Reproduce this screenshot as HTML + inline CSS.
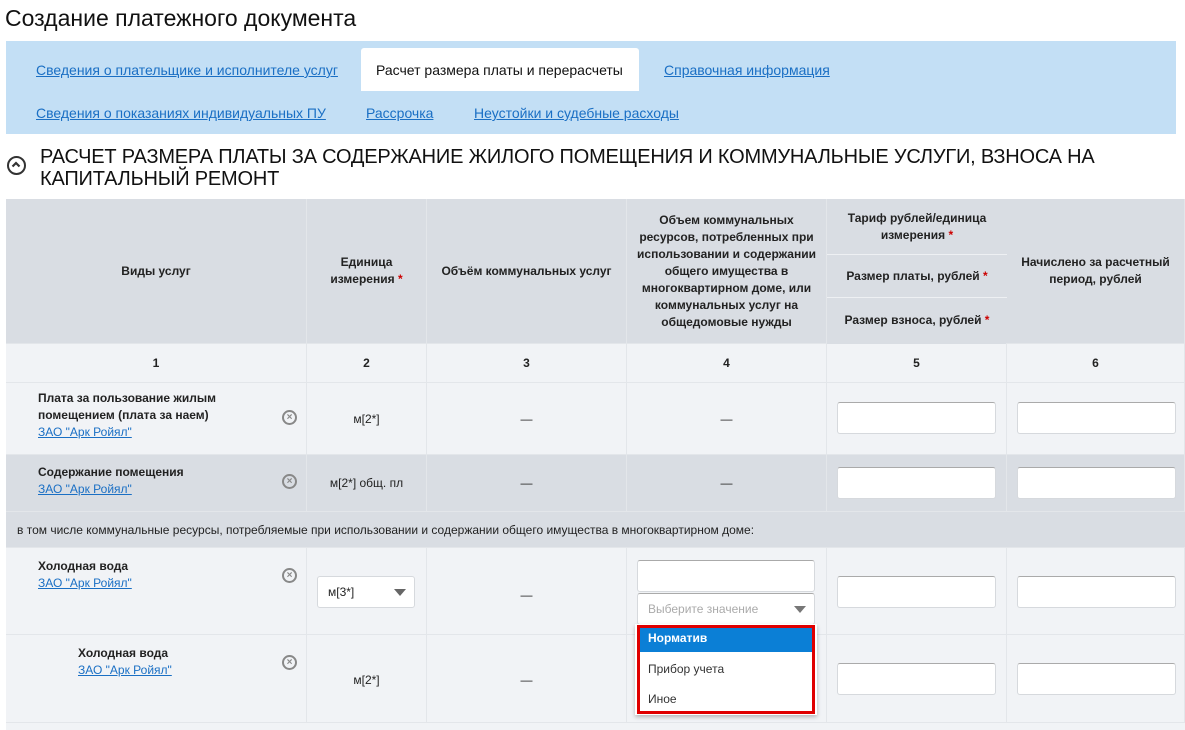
<!DOCTYPE html>
<html><head><meta charset="utf-8"><style>
body{margin:0;width:1185px;height:730px;overflow:hidden;background:#fff;font-family:"Liberation Sans",Arial,sans-serif;color:#222;position:relative}
.a{position:absolute}
a,.lnk{color:#1a6fc4;text-decoration:underline}
.t{font-size:14px}
.cell{position:absolute;box-sizing:border-box;border-right:1px solid #e3e6ea;border-bottom:1px solid #e3e6ea}
.hd{background:#d9dde3;font-weight:bold;font-size:12px;text-align:center;color:#222;display:flex;align-items:center;justify-content:center;line-height:17px}
.lt{background:#f1f3f6}
.dk{background:#d9dde3}
.c{display:flex;align-items:center;justify-content:center;font-size:12px}
.st{color:#c00}
.inp{position:absolute;background:#fff;border:1px solid #d6d9dd;border-top-color:#aaa;border-radius:3px;box-sizing:border-box}
.x{position:absolute;width:11px;height:11px;border:2px solid #888;border-radius:50%;font-size:10px;line-height:11px;text-align:center;color:#888;font-weight:bold}
.nm{position:absolute;font-size:12px;font-weight:bold;line-height:17px}
.sub{font-size:12px;font-weight:normal}
</style></head><body>
<div class="a" style="left:5px;top:5px;font-size:23px;color:#111">Создание платежного документа</div>
<div class="a" style="left:6px;top:41px;width:1170px;height:93px;background:#c3dff5"></div>
<div class="a" style="left:361px;top:48px;width:278px;height:43px;background:#fff;border-radius:3px 3px 0 0"></div>
<div class="a t lnk" style="left:36px;top:62px">Сведения о плательщике и исполнителе услуг</div>
<div class="a t" style="left:376px;top:62px;color:#111">Расчет размера платы и перерасчеты</div>
<div class="a t lnk" style="left:664px;top:62px">Справочная информация</div>
<div class="a t lnk" style="left:36px;top:105px">Сведения о показаниях индивидуальных ПУ</div>
<div class="a t lnk" style="left:366px;top:105px">Рассрочка</div>
<div class="a t lnk" style="left:474px;top:105px">Неустойки и судебные расходы</div>
<div class="a" style="left:7px;top:156px;width:19px;height:19px;border:2.5px solid #333;border-radius:50%;box-sizing:border-box"><svg width="14" height="14" viewBox="0 0 14 14" style="position:absolute;left:0;top:0"><path d="M3.5 8.5L7 5L10.5 8.5" fill="none" stroke="#333" stroke-width="2.2"/></svg></div>
<div class="a" style="left:40px;top:146px;font-size:20px;line-height:22px;color:#111;letter-spacing:-0.2px">РАСЧЕТ РАЗМЕРА ПЛАТЫ ЗА СОДЕРЖАНИЕ ЖИЛОГО ПОМЕЩЕНИЯ И КОММУНАЛЬНЫЕ УСЛУГИ, ВЗНОСА НА<br>КАПИТАЛЬНЫЙ РЕМОНТ</div>

<!-- header -->
<div class="cell hd" style="left:6px;top:199px;width:301px;height:145px">Виды услуг</div>
<div class="cell hd" style="left:307px;top:199px;width:120px;height:145px"><div>Единица<br>измерения <span class="st">*</span></div></div>
<div class="cell hd" style="left:427px;top:199px;width:200px;height:145px">Объём коммунальных услуг</div>
<div class="cell hd" style="left:627px;top:199px;width:200px;height:145px"><div>Объем коммунальных<br>ресурсов, потребленных при<br>использовании и содержании<br>общего имущества в<br>многоквартирном доме, или<br>коммунальных услуг на<br>общедомовые нужды</div></div>
<div class="cell hd" style="left:827px;top:199px;width:180px;height:145px;border-bottom:none"></div>
<div class="a hd" style="left:827px;top:199px;width:180px;height:55px;border-bottom:1px solid #eef0f3"><div>Тариф рублей/единица<br>измерения <span class="st">*</span></div></div>
<div class="a hd" style="left:827px;top:255px;width:180px;height:43px;border-bottom:1px solid #eef0f3;box-sizing:border-box"><div>Размер платы, рублей <span class="st">*</span></div></div>
<div class="a hd" style="left:827px;top:298px;width:180px;height:45px"><div>Размер взноса, рублей <span class="st">*</span></div></div>
<div class="cell hd" style="left:1007px;top:199px;width:178px;height:145px"><div>Начислено за расчетный<br>период, рублей</div></div>

<!-- numbers -->
<div class="cell lt c" style="left:6px;top:344px;width:301px;height:39px;font-weight:bold">1</div>
<div class="cell lt c" style="left:307px;top:344px;width:120px;height:39px;font-weight:bold">2</div>
<div class="cell lt c" style="left:427px;top:344px;width:200px;height:39px;font-weight:bold">3</div>
<div class="cell lt c" style="left:627px;top:344px;width:200px;height:39px;font-weight:bold">4</div>
<div class="cell lt c" style="left:827px;top:344px;width:180px;height:39px;font-weight:bold">5</div>
<div class="cell lt c" style="left:1007px;top:344px;width:178px;height:39px;font-weight:bold">6</div>

<!-- row1 -->
<div class="cell lt" style="left:6px;top:383px;width:301px;height:72px"></div>
<div class="cell lt c" style="left:307px;top:383px;width:120px;height:72px">м[2*]</div>
<div class="cell lt c" style="left:427px;top:383px;width:200px;height:72px">—</div>
<div class="cell lt c" style="left:627px;top:383px;width:200px;height:72px">—</div>
<div class="cell lt" style="left:827px;top:383px;width:180px;height:72px"></div>
<div class="cell lt" style="left:1007px;top:383px;width:178px;height:72px"></div>
<div class="nm" style="left:38px;top:390px">Плата за пользование жилым<br>помещением (плата за наем)<br><span class="lnk sub">ЗАО "Арк Ройял"</span></div>
<div class="x" style="left:282px;top:410px">×</div>
<div class="inp" style="left:837px;top:402px;width:159px;height:32px"></div>
<div class="inp" style="left:1017px;top:402px;width:159px;height:32px"></div>

<!-- row2 -->
<div class="cell dk" style="left:6px;top:455px;width:301px;height:57px"></div>
<div class="cell dk c" style="left:307px;top:455px;width:120px;height:57px">м[2*] общ. пл</div>
<div class="cell dk c" style="left:427px;top:455px;width:200px;height:57px">—</div>
<div class="cell dk c" style="left:627px;top:455px;width:200px;height:57px">—</div>
<div class="cell dk" style="left:827px;top:455px;width:180px;height:57px"></div>
<div class="cell dk" style="left:1007px;top:455px;width:178px;height:57px"></div>
<div class="nm" style="left:38px;top:464px">Содержание помещения<br><span class="lnk sub">ЗАО "Арк Ройял"</span></div>
<div class="x" style="left:282px;top:474px">×</div>
<div class="inp" style="left:837px;top:467px;width:159px;height:32px"></div>
<div class="inp" style="left:1017px;top:467px;width:159px;height:32px"></div>

<!-- note -->
<div class="a" style="left:6px;top:512px;width:1179px;height:36px;background:#d9dde3;font-size:12px;line-height:36px;box-sizing:border-box;padding-left:11px;border-bottom:1px solid #e3e6ea">в том числе коммунальные ресурсы, потребляемые при использовании и содержании общего имущества в многоквартирном доме:</div>

<!-- row3 -->
<div class="cell lt" style="left:6px;top:548px;width:301px;height:87px"></div>
<div class="cell lt" style="left:307px;top:548px;width:120px;height:87px"></div>
<div class="cell lt c" style="left:427px;top:548px;width:200px;height:87px;padding-top:8px">—</div>
<div class="cell lt" style="left:627px;top:548px;width:200px;height:87px"></div>
<div class="cell lt" style="left:827px;top:548px;width:180px;height:87px"></div>
<div class="cell lt" style="left:1007px;top:548px;width:178px;height:87px"></div>
<div class="nm" style="left:38px;top:558px">Холодная вода<br><span class="lnk sub">ЗАО "Арк Ройял"</span></div>
<div class="x" style="left:282px;top:568px">×</div>
<div class="inp" style="left:317px;top:576px;width:98px;height:32px;border-top-color:#d6d9dd;font-size:12px;line-height:30px;padding-left:10px">м[3*]<span style="position:absolute;right:8px;top:12px;border-left:6px solid transparent;border-right:6px solid transparent;border-top:7px solid #666"></span></div>
<div class="inp" style="left:637px;top:560px;width:178px;height:32px"></div>
<div class="inp" style="left:637px;top:593px;width:178px;height:32px;font-size:12px;line-height:30px;padding-left:10px;color:#aaa">Выберите значение<span style="position:absolute;right:8px;top:12px;border-left:6px solid transparent;border-right:6px solid transparent;border-top:7px solid #777"></span></div>
<div class="inp" style="left:837px;top:576px;width:159px;height:32px"></div>
<div class="inp" style="left:1017px;top:576px;width:159px;height:32px"></div>

<!-- row4 -->
<div class="cell lt" style="left:6px;top:635px;width:301px;height:88px"></div>
<div class="cell lt c" style="left:307px;top:635px;width:120px;height:88px;padding-top:2px">м[2*]</div>
<div class="cell lt c" style="left:427px;top:635px;width:200px;height:88px;padding-top:2px">—</div>
<div class="cell lt" style="left:627px;top:635px;width:200px;height:88px"></div>
<div class="cell lt" style="left:827px;top:635px;width:180px;height:88px"></div>
<div class="cell lt" style="left:1007px;top:635px;width:178px;height:88px"></div>
<div class="a" style="left:6px;top:723px;width:1179px;height:7px;background:#f1f3f6"></div>
<div class="nm" style="left:78px;top:645px">Холодная вода<br><span class="lnk sub">ЗАО "Арк Ройял"</span></div>
<div class="x" style="left:282px;top:655px">×</div>
<div class="inp" style="left:837px;top:663px;width:159px;height:32px"></div>
<div class="inp" style="left:1017px;top:663px;width:159px;height:32px"></div>

<!-- dropdown -->
<div class="a" style="left:635px;top:624px;width:182px;height:91px;background:#fff;box-shadow:0 2px 4px rgba(0,0,0,.25)"></div>
<div class="a" style="left:637px;top:625px;width:178px;height:27px;background:#0b7fd6"></div>
<div class="a" style="left:637px;top:625px;width:178px;height:89px;border:3px solid #e00000;box-sizing:border-box"></div>
<div class="a" style="left:648px;top:631px;font-size:12px;font-weight:bold;color:#fff">Норматив</div>
<div class="a" style="left:648px;top:662px;font-size:12px;color:#333">Прибор учета</div>
<div class="a" style="left:648px;top:692px;font-size:12px;color:#333">Иное</div>
</body></html>
